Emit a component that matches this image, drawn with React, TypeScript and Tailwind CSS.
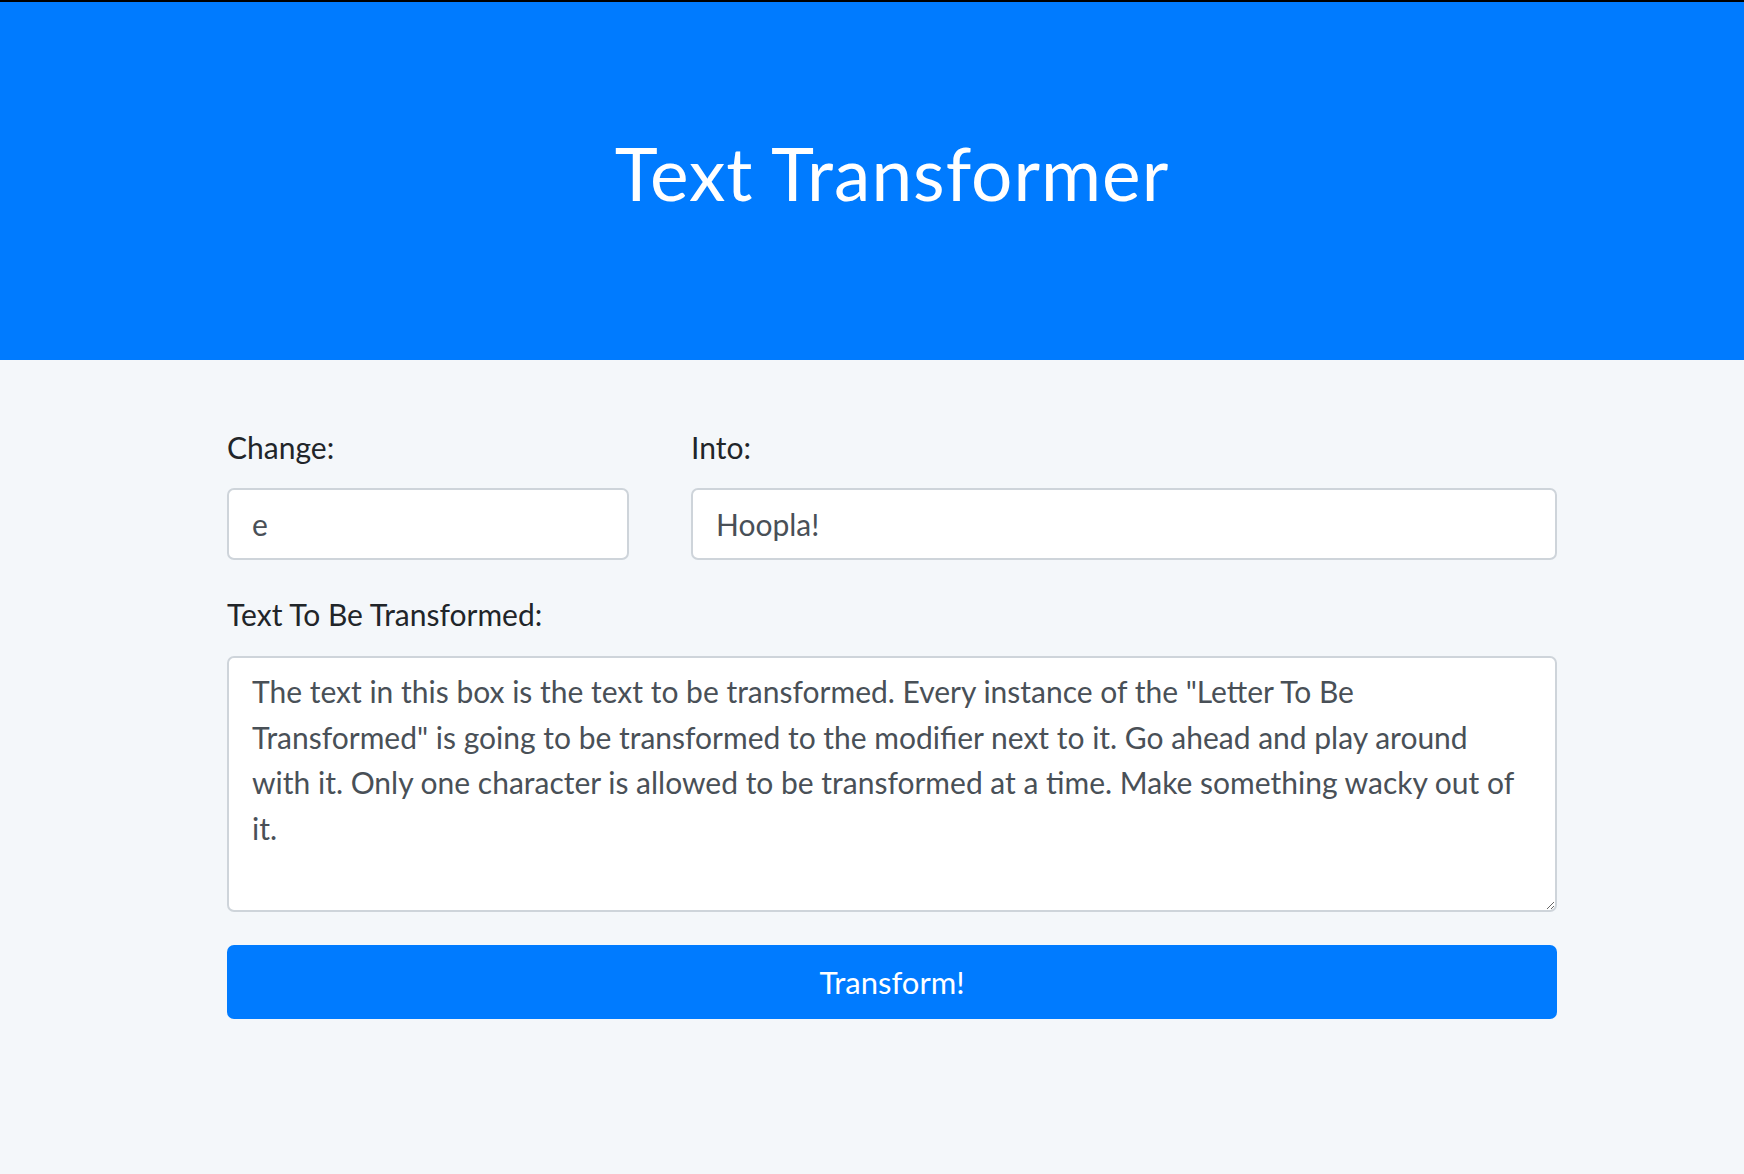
import { useState } from 'react';

const sample =
    'The text in this box is the text to be transformed. Every instance of the "Letter To Be Transformed" is going to be transformed to the modifier next to it. Go ahead and play around with it. Only one character is allowed to be transformed at a time. Make something wacky out of it.';

const App = () => {
    const [from, setFrom] = useState('e');
    const [to, setTo] = useState('Hoopla!');
    const [text, setText] = useState(sample);

    const transform = () => {
        if (!from) return;
        setText(text.split(from).join(to));
    };

    return (
        <div className="min-h-screen bg-[#f4f7fa] font-['Lato',sans-serif] text-[#212529]">
            <header className="h-[360px] border-t-2 border-black bg-[#007bff] text-white">
                <div className="ml-[227px] w-[1330px] pt-[128px] text-center">
                    <h1 className="text-[73px] font-normal leading-[1.2] tracking-[1px]">Text Transformer</h1>
                </div>
            </header>

            <main className="ml-[227px] w-[1330px] pt-[66px]">
                <div className="grid grid-cols-3 gap-x-[62px]">
                    <div className="flex flex-col">
                        <label className="mb-[20px] text-[30px] leading-[42px]">Change:</label>
                        <input
                            value={from}
                            maxLength={1}
                            onChange={(e) => setFrom(e.target.value)}
                            className="h-[72px] rounded-[7px] border-2 border-[#ced4da] bg-white px-[23px] text-[30px] text-[#495057] outline-none"
                        />
                    </div>
                    <div className="col-span-2 flex flex-col">
                        <label className="mb-[20px] text-[30px] leading-[42px]">Into:</label>
                        <input
                            value={to}
                            onChange={(e) => setTo(e.target.value)}
                            className="h-[72px] rounded-[7px] border-2 border-[#ced4da] bg-white px-[23px] text-[30px] text-[#495057] outline-none"
                        />
                    </div>
                </div>

                <div className="mt-[33px] flex flex-col">
                    <label className="mb-[21px] text-[30px] leading-[42px]">Text To Be Transformed:</label>
                    <textarea
                        rows={5}
                        value={text}
                        onChange={(e) => setText(e.target.value)}
                        className="h-[256px] rounded-[7px] border-2 border-[#ced4da] bg-white px-[23px] py-[11px] text-[30px] leading-[45.6px] text-[#495057] outline-none"
                    />
                </div>

                <button
                    onClick={transform}
                    className="mt-[33px] h-[74px] w-full rounded-[7px] bg-[#007bff] text-[31px] text-white"
                >
                    Transform!
                </button>
            </main>
        </div>
    );
};

export default App;
